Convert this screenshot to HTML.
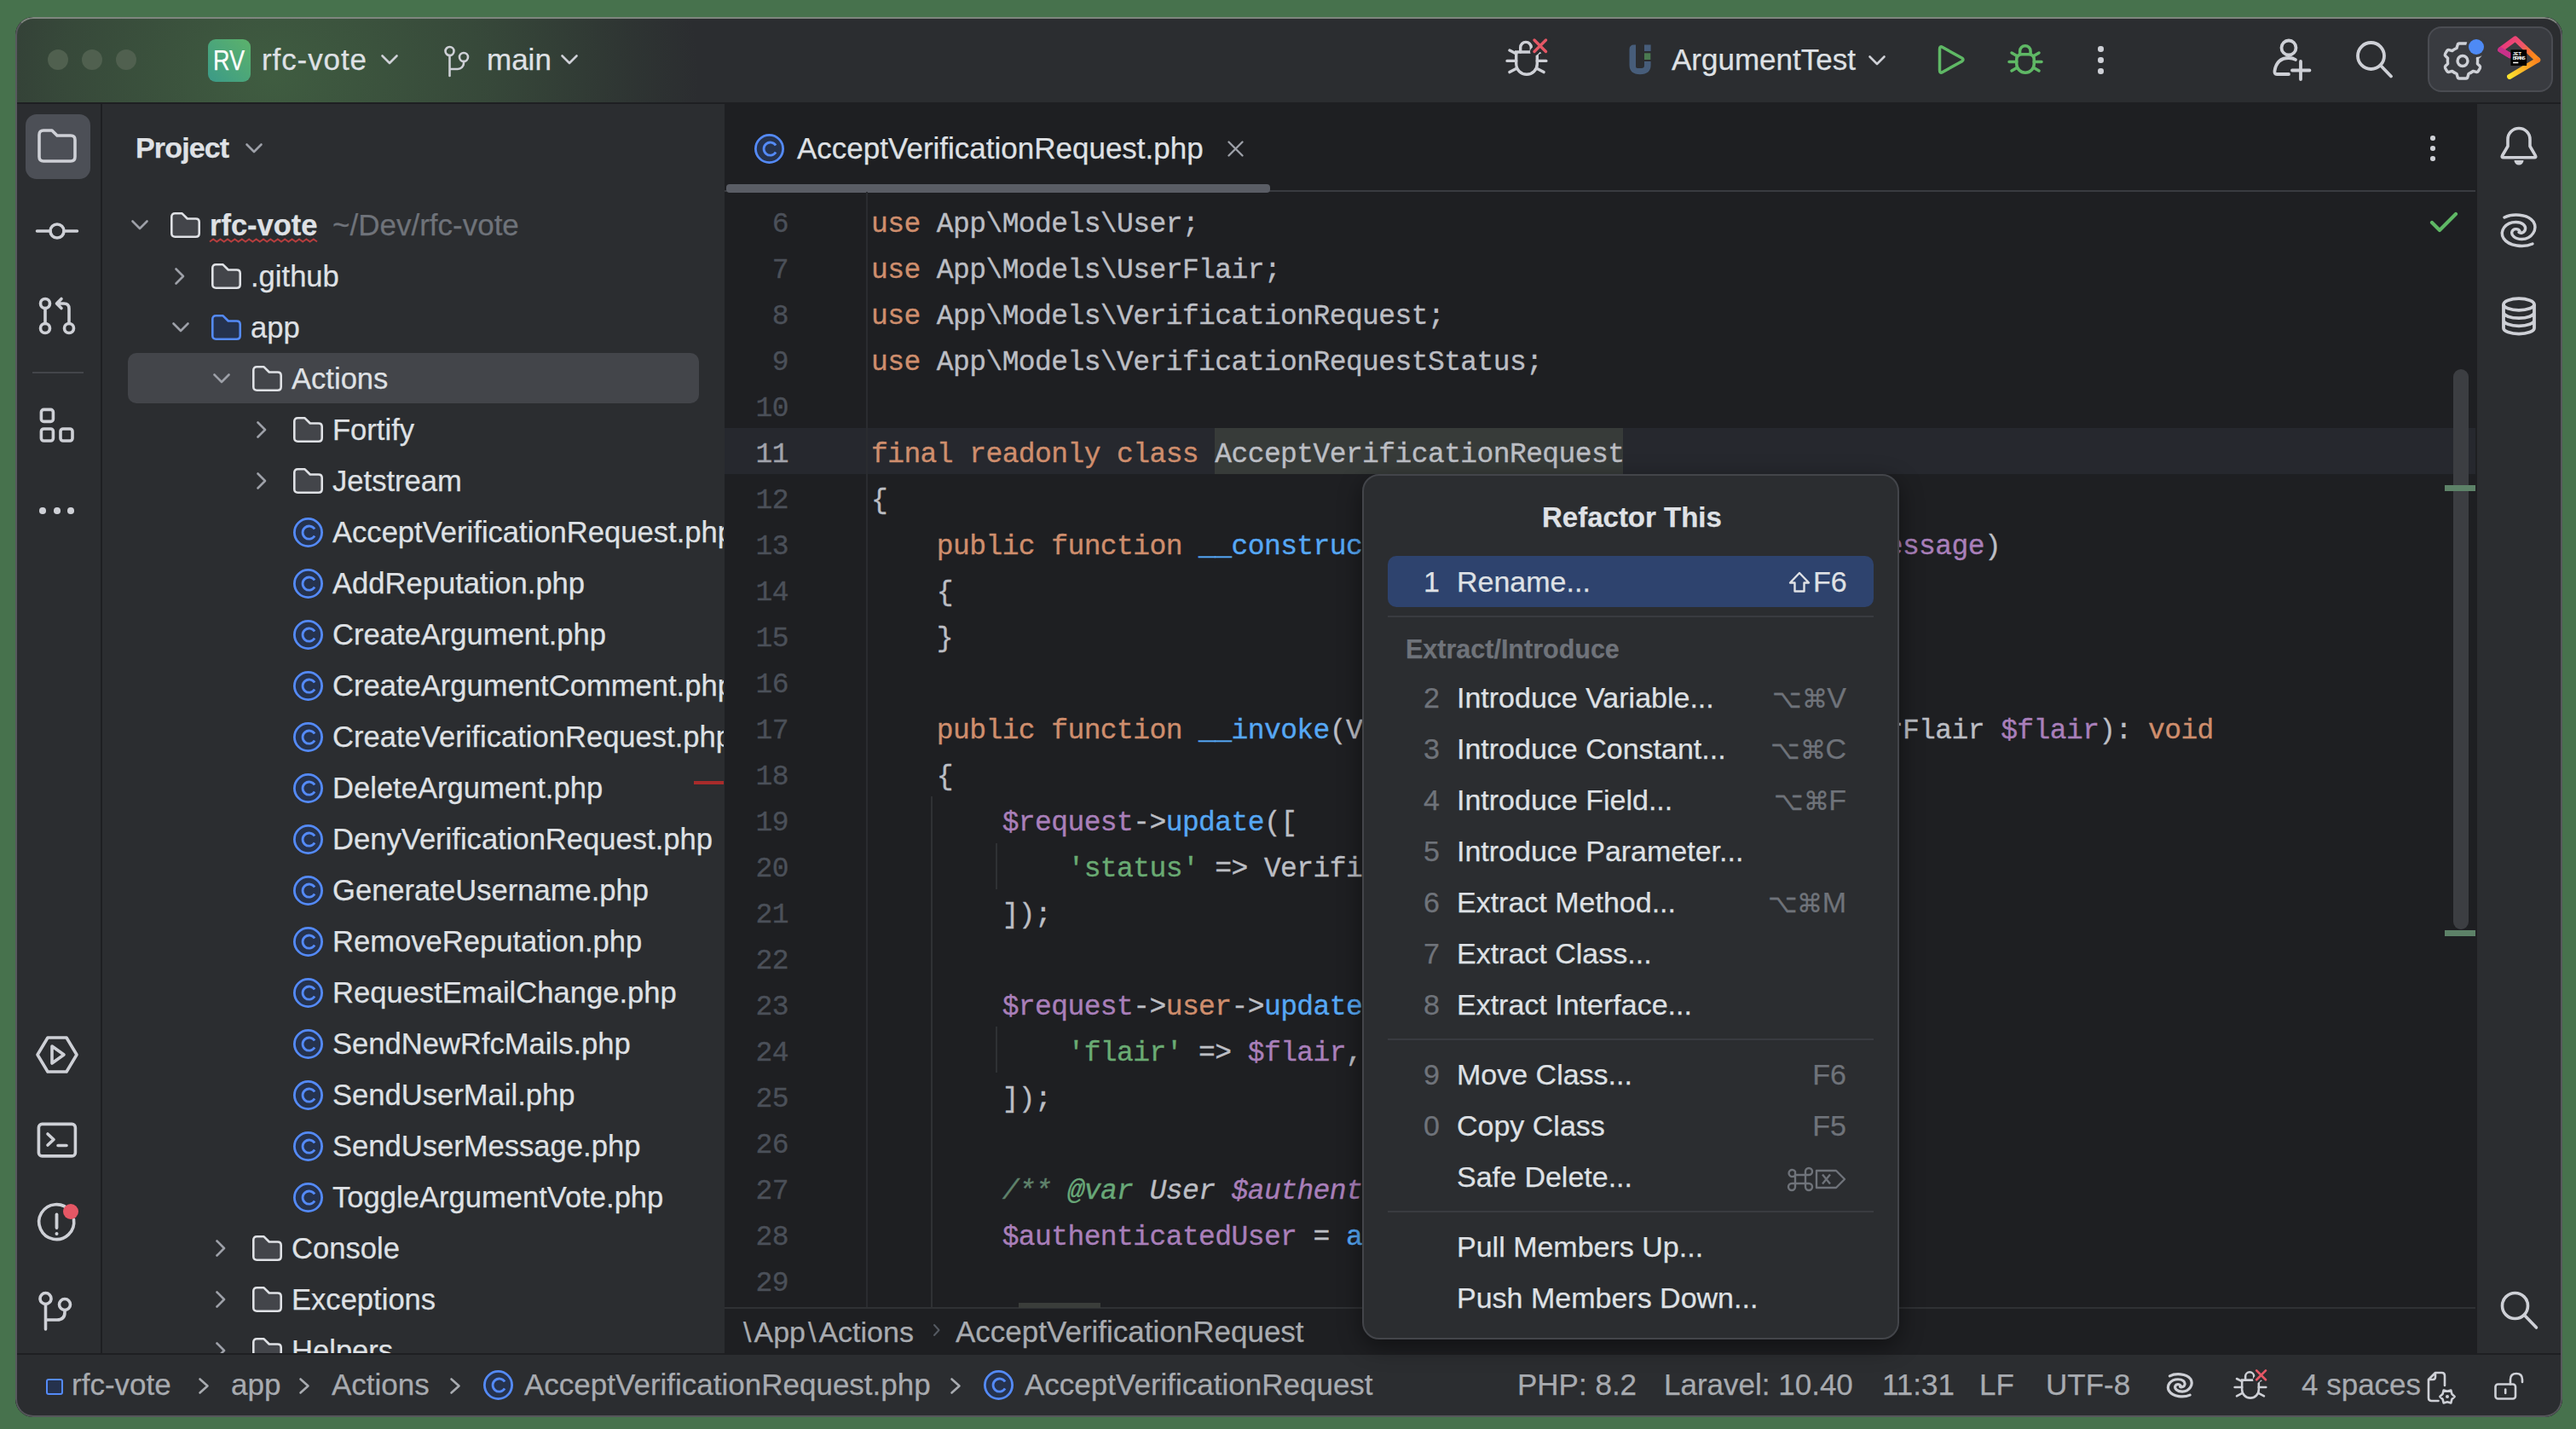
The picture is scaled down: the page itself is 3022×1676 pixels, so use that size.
<!DOCTYPE html><html><head><meta charset="utf-8"><title>PhpStorm</title><style>
*{margin:0;padding:0;box-sizing:border-box}
html,body{width:3022px;height:1676px;overflow:hidden;background:#47724d;font-family:"Liberation Sans", sans-serif}
.a{position:absolute}
svg.a{overflow:visible}
.t{position:absolute;white-space:nowrap;line-height:1;-webkit-text-stroke:0.25px currentColor}
#win{position:absolute;left:0;top:0;width:3022px;height:1676px;clip-path:inset(20px 16px 14px 18px round 21px);background:#2b2d30;overflow:hidden}
.code{position:absolute;white-space:pre;font-family:"Liberation Mono", monospace;font-size:33px;letter-spacing:-0.6px;line-height:54px;color:#bcbec4;-webkit-text-stroke:0.35px currentColor}
.k{color:#cf8e6d} .f{color:#56a8f5} .v{color:#a97fba} .s{color:#6aab73} .d{color:#5f826b;font-style:italic} .i{font-style:italic}
</style></head><body><div id="win">
<div class="a" style="left:0px;top:20px;width:3022px;height:100px;background:radial-gradient(ellipse 500px 420px at 320px 70px, rgba(82,136,80,0.52), rgba(82,136,80,0.30) 50%, rgba(82,136,80,0.08) 85%, rgba(82,136,80,0) 100%), #2b2d30;"></div>
<div class="a" style="left:0px;top:120px;width:3022px;height:2px;background:#1e1f22;"></div>
<div class="a" style="left:56px;top:58px;width:24px;height:24px;border-radius:50%;background:#50604f"></div>
<div class="a" style="left:96px;top:58px;width:24px;height:24px;border-radius:50%;background:#50604f"></div>
<div class="a" style="left:136px;top:58px;width:24px;height:24px;border-radius:50%;background:#50604f"></div>
<div class="a" style="left:244px;top:46px;width:50px;height:50px;border-radius:9px;background:linear-gradient(225deg,#5cb26b,#3b9a88)"></div>
<div class="t" style="left:250.00px;top:54.07px;font-size:33px;color:#ffffff;font-weight:normal;transform:scaleX(0.82);transform-origin:0 0">RV</div>
<div class="t" style="left:307.00px;top:52.37px;font-size:35px;color:#dfe1e5;font-weight:normal;letter-spacing:0.9px">rfc-vote</div>
<svg class="a" style="left:447px;top:64px;" width="20" height="12" viewBox="0 0 20 12" fill="none"><path d="M1.5 1.5 L10 10 L18.5 1.5" stroke="#ced0d6" stroke-width="2.6" stroke-linecap="round" stroke-linejoin="round"/></svg>
<svg class="a" style="left:521px;top:53px;" width="30" height="38" viewBox="0 0 30 38" fill="none"><circle cx="6.5" cy="7" r="5" stroke="#ced0d6" stroke-width="2.6"/><circle cx="23" cy="14" r="5" stroke="#ced0d6" stroke-width="2.6"/><path d="M6.5 12 V36 M6.5 28 H16 A7 7 0 0 0 23 21 V19" stroke="#ced0d6" stroke-width="2.6" stroke-linecap="round"/></svg>
<div class="t" style="left:571.00px;top:52.37px;font-size:35px;color:#dfe1e5;font-weight:normal;">main</div>
<svg class="a" style="left:658px;top:64px;" width="20" height="12" viewBox="0 0 20 12" fill="none"><path d="M1.5 1.5 L10 10 L18.5 1.5" stroke="#ced0d6" stroke-width="2.6" stroke-linecap="round" stroke-linejoin="round"/></svg>
<svg class="a" style="left:1766px;top:44px;" width="50" height="46" viewBox="0 0 50 46" fill="none"><g stroke="#ced0d6" stroke-width="3.4" stroke-linecap="round" fill="none"><path d="M12.7 17 H37.3 V31 A12.3 12.3 0 0 1 12.7 31 Z"/><path d="M17.7 17 V11.7 A6.3 6.3 0 0 1 30.3 11.7 V17"/><path d="M2 27.4 H12.7 M37.3 27.4 H47.9 M5 15 L12.7 19 M37.3 19 L45 15 M5 40.6 L12.7 36.5 M37.3 36.5 L45 40.6"/></g><path d="M34 3 L47.5 16.5 M47.5 3 L34 16.5" stroke="#2b2d30" stroke-width="10" stroke-linecap="round"/><path d="M34 3 L47.5 16.5 M47.5 3 L34 16.5" stroke="#e55765" stroke-width="3.4" stroke-linecap="round"/></svg>
<svg class="a" style="left:1910px;top:52px;" width="28" height="36" viewBox="0 0 28 36" fill="none"><path d="M1.5 6 Q1.5 0.5 7 0.5 H9 V26 Q9 28 11 28 H15.5 Q19 28 19 25 V20 H26.6 V24 Q26.6 35.2 14 35.2 Q1.5 35.2 1.5 24 Z" fill="#475d7a"/><rect x="19" y="0.5" width="7.6" height="7.5" fill="#475d7a"/><rect x="19" y="10.3" width="7.3" height="7.7" fill="#4a7a50"/></svg>
<div class="t" style="left:1961.00px;top:52.37px;font-size:35px;color:#dfe1e5;font-weight:normal;">ArgumentTest</div>
<svg class="a" style="left:2192px;top:65px;" width="20" height="12" viewBox="0 0 20 12" fill="none"><path d="M1.5 1.5 L10 10 L18.5 1.5" stroke="#ced0d6" stroke-width="2.6" stroke-linecap="round" stroke-linejoin="round"/></svg>
<svg class="a" style="left:2272px;top:52px;" width="36" height="37" viewBox="0 0 36 37" fill="none"><path d="M3.5 5.5 Q3.5 1.5 7 3.5 L29.5 16 Q32.5 18 29.5 20 L7 32.5 Q3.5 34.5 3.5 30.5 Z" stroke="#5fb865" stroke-width="3.5" stroke-linejoin="round"/></svg>
<svg class="a" style="left:2355px;top:50px;" width="42" height="40" viewBox="0 0 42 40" fill="none"><g stroke="#5fb865" stroke-width="3.5" stroke-linecap="round" fill="none"><path d="M10.75 20 Q10.75 13.75 17 13.75 H25 Q31.25 13.75 31.25 20 V25 A10.25 10.25 0 0 1 10.75 25 Z"/><path d="M14.6 13.5 V10 A6.25 6.25 0 0 1 27.1 10 V13.5"/><path d="M2 22.5 H10.75 M31.25 22.5 H40 M5 12 L11 15.5 M31 15.5 L37 12 M5 33 L11 29.5 M31 29.5 L37 33"/></g></svg>
<div class="a" style="left:2461px;top:54px;width:6.5px;height:6.5px;border-radius:50%;background:#ced0d6"></div>
<div class="a" style="left:2461px;top:67px;width:6.5px;height:6.5px;border-radius:50%;background:#ced0d6"></div>
<div class="a" style="left:2461px;top:80px;width:6.5px;height:6.5px;border-radius:50%;background:#ced0d6"></div>
<svg class="a" style="left:2666px;top:45px;" width="48" height="52" viewBox="0 0 48 52" fill="none"><circle cx="19" cy="11" r="8.5" stroke="#ced0d6" stroke-width="3.8"/><path d="M19 42 H5 Q2 42 2.5 38 Q5 23 19 23 Q24 23 27 25" stroke="#ced0d6" stroke-width="3.8" stroke-linecap="round"/><path d="M33 27 V48 M23 37.5 H43.5" stroke="#ced0d6" stroke-width="3.8" stroke-linecap="round"/></svg>
<svg class="a" style="left:2764px;top:48px;" width="46" height="46" viewBox="0 0 46 46" fill="none"><circle cx="17.5" cy="17.5" r="15.5" stroke="#ced0d6" stroke-width="3.8"/><path d="M29 29 L41 41.5" stroke="#ced0d6" stroke-width="3.8" stroke-linecap="round"/></svg>
<div class="a" style="left:2848px;top:31px;width:147px;height:77px;border-radius:16px;background:#393b40;border:2px solid #4a4c52"></div>
<svg class="a" style="left:2866px;top:48px;" width="46" height="47" viewBox="0 0 46 47" fill="none"><path d="M23 3 L27 3 Q28.5 3 29 5 L30 8.5 Q33 9.7 35.3 11.6 L38.8 10.6 Q40.5 10.1 41.4 11.6 L43.4 15 Q44.2 16.5 43 17.8 L40.4 20.3 Q40.9 23.5 40.4 26.7 L43 29.2 Q44.2 30.5 43.4 32 L41.4 35.4 Q40.5 36.9 38.8 36.4 L35.3 35.4 Q33 37.3 30 38.5 L29 42 Q28.5 44 27 44 L19 44 Q17.5 44 17 42 L16 38.5 Q13 37.3 10.7 35.4 L7.2 36.4 Q5.5 36.9 4.6 35.4 L2.6 32 Q1.8 30.5 3 29.2 L5.6 26.7 Q5.1 23.5 5.6 20.3 L3 17.8 Q1.8 16.5 2.6 15 L4.6 11.6 Q5.5 10.1 7.2 10.6 L10.7 11.6 Q13 9.7 16 8.5 L17 5 Q17.5 3 19 3 Z" stroke="#ced0d6" stroke-width="3.4" stroke-linejoin="round"/><circle cx="23" cy="23.5" r="6" stroke="#ced0d6" stroke-width="3.4"/></svg>
<div class="a" style="left:2896px;top:46px;width:18px;height:18px;border-radius:50%;background:#4e8af5;box-shadow:0 0 0 3px #393b40"></div>
<svg class="a" style="left:2928px;top:40px;" width="56" height="58" viewBox="0 0 56 58" fill="none"><g transform="translate(3.2,3.2) scale(0.89)"><defs><linearGradient id="jg1" gradientUnits="userSpaceOnUse" x1="2" y1="10" x2="50" y2="40"><stop offset="0" stop-color="#e8357f"/><stop offset="0.45" stop-color="#f0566a"/><stop offset="0.75" stop-color="#fc801d"/><stop offset="1" stop-color="#fd9a1d"/></linearGradient><linearGradient id="jg2" gradientUnits="userSpaceOnUse" x1="51" y1="30" x2="14" y2="52"><stop offset="0" stop-color="#fc801d"/><stop offset="1" stop-color="#fde22f"/></linearGradient></defs><path d="M15 24.6 L2.5 17 L22 2.5 L51.5 30.5" stroke="url(#jg1)" stroke-width="7" stroke-linejoin="round" stroke-linecap="round"/><path d="M51.5 30.5 L14.6 52.4" stroke="url(#jg2)" stroke-width="7" stroke-linecap="round"/><path d="M15 24.6 L2.5 17" stroke="#c8308a" stroke-width="7" stroke-linecap="round"/><rect x="16" y="17" width="21" height="21" fill="#000"/><path d="M19 34 H26" stroke="#fff" stroke-width="1.6"/><text x="18.5" y="24.5" font-size="6.2" fill="#fff" font-family="Liberation Sans" font-weight="bold">JET</text><text x="18.5" y="30" font-size="6.2" fill="#fff" font-family="Liberation Sans" font-weight="bold" textLength="17">BRAINS</text></g></svg>
<div class="a" style="left:0px;top:122px;width:118px;height:1466px;background:#2b2d30;"></div>
<div class="a" style="left:118px;top:122px;width:2px;height:1466px;background:#1e1f22;"></div>
<div class="a" style="left:30px;top:134px;width:76px;height:76px;border-radius:13px;background:#4c4f56"></div>
<svg class="a" style="left:44px;top:151px;" width="46" height="40" viewBox="0 0 46 40" fill="none"><path d="M2 33 V7 Q2 2 7 2 H17 L23 8 H39 Q44 8 44 13 V33 Q44 38 39 38 H7 Q2 38 2 33 Z" stroke="#ced0d6" stroke-width="3.6" stroke-linejoin="round"/></svg>
<svg class="a" style="left:42px;top:260px;" width="50" height="22" viewBox="0 0 50 22" fill="none"><circle cx="25" cy="11" r="8" stroke="#ced0d6" stroke-width="3.6"/><path d="M1.5 11 H17 M33 11 H48.5" stroke="#ced0d6" stroke-width="3.6" stroke-linecap="round"/></svg>
<svg class="a" style="left:45px;top:348px;" width="46" height="46" viewBox="0 0 46 46" fill="none"><circle cx="8" cy="8" r="5.5" stroke="#ced0d6" stroke-width="3.6"/><circle cx="8" cy="37" r="5.5" stroke="#ced0d6" stroke-width="3.6"/><circle cx="36" cy="37" r="5.5" stroke="#ced0d6" stroke-width="3.6"/><path d="M8 13.5 V31.5 M36 31.5 V14 Q36 8 30 8 H22 M27 2.5 L21.5 8 L27 13.5" stroke="#ced0d6" stroke-width="3.6" stroke-linecap="round" stroke-linejoin="round"/></svg>
<div class="a" style="left:38px;top:436px;width:60px;height:2px;background:#43454a;"></div>
<svg class="a" style="left:46px;top:478px;" width="42" height="42" viewBox="0 0 42 42" fill="none"><rect x="2.4" y="2.4" width="14" height="14" rx="3" stroke="#ced0d6" stroke-width="3.6"/><rect x="2.4" y="25" width="14" height="14" rx="3" stroke="#ced0d6" stroke-width="3.6"/><rect x="25" y="25" width="14" height="14" rx="3" stroke="#ced0d6" stroke-width="3.6"/></svg>
<div class="a" style="left:46.2px;top:595.2px;width:7.6px;height:7.6px;border-radius:50%;background:#ced0d6"></div>
<div class="a" style="left:63.2px;top:595.2px;width:7.6px;height:7.6px;border-radius:50%;background:#ced0d6"></div>
<div class="a" style="left:79.2px;top:595.2px;width:7.6px;height:7.6px;border-radius:50%;background:#ced0d6"></div>
<svg class="a" style="left:42px;top:1215px;" width="50" height="44" viewBox="0 0 50 44" fill="none"><path d="M14 2 H36 L48 22 L36 42 H14 L2 22 Z" stroke="#ced0d6" stroke-width="3.6" stroke-linejoin="round"/><path d="M19 12 L33 22 L19 32 Z" stroke="#ced0d6" stroke-width="3.6" stroke-linejoin="round"/></svg>
<svg class="a" style="left:44px;top:1317px;" width="46" height="41" viewBox="0 0 46 41" fill="none"><rect x="1.4" y="1.4" width="43" height="37.5" rx="4" stroke="#ced0d6" stroke-width="3.6"/><path d="M12 13 L19 19.5 L12 26 M24 26.5 H34" stroke="#ced0d6" stroke-width="3.6" stroke-linecap="round" stroke-linejoin="round"/></svg>
<svg class="a" style="left:44px;top:1414px;" width="50" height="47" viewBox="0 0 50 47" fill="none"><path d="M38 6 A20.5 20.5 0 1 0 42.5 16" stroke="#ced0d6" stroke-width="3.6" stroke-linecap="round"/><path d="M22.5 10.5 V26" stroke="#ced0d6" stroke-width="3.8" stroke-linecap="round"/><circle cx="22.5" cy="33" r="2" fill="#ced0d6"/></svg>
<div class="a" style="left:74px;top:1412px;width:18px;height:18px;border-radius:50%;background:#e55765"></div>
<svg class="a" style="left:45px;top:1514px;" width="42" height="47" viewBox="0 0 42 47" fill="none"><circle cx="8.5" cy="9" r="6.5" stroke="#ced0d6" stroke-width="3.6"/><circle cx="31" cy="16" r="6.5" stroke="#ced0d6" stroke-width="3.6"/><path d="M8.5 15.5 V45 M8.5 34 H22 Q31 34 31 25 V22.5" stroke="#ced0d6" stroke-width="3.6" stroke-linecap="round"/></svg>
<div class="a" style="left:120px;top:122px;width:730px;height:1466px;background:#2b2d30;"></div>
<div class="t" style="left:159.00px;top:156.22px;font-size:34px;color:#dfe1e5;font-weight:bold;letter-spacing:-0.85px">Project</div>
<svg class="a" style="left:288px;top:168px;" width="20" height="12" viewBox="0 0 20 12" fill="none"><path d="M1.5 1.5 L10 10 L18.5 1.5" stroke="#9da0a8" stroke-width="2.6" stroke-linecap="round" stroke-linejoin="round"/></svg>
<div class="a" style="left:120px;top:122px;width:730px;height:1466px;overflow:hidden;">
<div class="a" style="left:30px;top:292px;width:670px;height:59px;border-radius:10px;background:#43454a"></div>
<svg class="a" style="left:34px;top:136px;" width="20" height="12" viewBox="0 0 20 12" fill="none"><path d="M1.5 1.5 L10 10 L18.5 1.5" stroke="#9da0a8" stroke-width="2.6" stroke-linecap="round" stroke-linejoin="round"/></svg>
<svg class="a" style="left:80px;top:127px;" width="35" height="30" viewBox="0 0 35 30" fill="none"><path d="M1.3 24.7 V5.3 Q1.3 1.3 5.3 1.3 H13.6 L19.8 7.5 H29.7 Q33.7 7.5 33.7 11.5 V24.7 Q33.7 28.7 29.7 28.7 H5.3 Q1.3 28.7 1.3 24.7 Z" fill="#43454a" stroke="#dfe1e5" stroke-width="2.6" stroke-linejoin="round"/></svg>
<div class="t" style="left:126.00px;top:124.80px;font-size:34.5px;color:#dfe1e5;font-weight:bold;">rfc-vote</div>
<div class="t" style="left:270.00px;top:124.37px;font-size:35px;color:#6f737a;font-weight:normal;">~/Dev/rfc-vote</div>
<svg class="a" style="left:126px;top:156px;" width="126" height="8" viewBox="0 0 126 8" fill="none"><path d="M0.0 5.5 L4.2 2.5 L8.4 5.5 L12.6 2.5 L16.8 5.5 L21.0 2.5 L25.2 5.5 L29.4 2.5 L33.6 5.5 L37.8 2.5 L42.0 5.5 L46.2 2.5 L50.4 5.5 L54.6 2.5 L58.8 5.5 L63.0 2.5 L67.2 5.5 L71.4 2.5 L75.6 5.5 L79.8 2.5 L84.0 5.5 L88.2 2.5 L92.4 5.5 L96.6 2.5 L100.8 5.5 L105.0 2.5 L109.2 5.5 L113.4 2.5 L117.6 5.5 L121.8 2.5 L126.0 5.5" stroke="#b53e3e" stroke-width="2"/></svg>
<svg class="a" style="left:85px;top:192px;" width="12" height="20" viewBox="0 0 12 20" fill="none"><path d="M1.5 1.5 L10 10 L1.5 18.5" stroke="#9da0a8" stroke-width="2.6" stroke-linecap="round" stroke-linejoin="round"/></svg>
<svg class="a" style="left:128px;top:187px;" width="35" height="30" viewBox="0 0 35 30" fill="none"><path d="M1.3 24.7 V5.3 Q1.3 1.3 5.3 1.3 H13.6 L19.8 7.5 H29.7 Q33.7 7.5 33.7 11.5 V24.7 Q33.7 28.7 29.7 28.7 H5.3 Q1.3 28.7 1.3 24.7 Z" fill="#43454a" stroke="#dfe1e5" stroke-width="2.6" stroke-linejoin="round"/></svg>
<div class="t" style="left:174.00px;top:184.71px;font-size:34.6px;color:#dfe1e5;font-weight:normal;">.github</div>
<svg class="a" style="left:82px;top:256px;" width="20" height="12" viewBox="0 0 20 12" fill="none"><path d="M1.5 1.5 L10 10 L18.5 1.5" stroke="#9da0a8" stroke-width="2.6" stroke-linecap="round" stroke-linejoin="round"/></svg>
<svg class="a" style="left:128px;top:247px;" width="35" height="30" viewBox="0 0 35 30" fill="none"><path d="M1.3 24.7 V5.3 Q1.3 1.3 5.3 1.3 H13.6 L19.8 7.5 H29.7 Q33.7 7.5 33.7 11.5 V24.7 Q33.7 28.7 29.7 28.7 H5.3 Q1.3 28.7 1.3 24.7 Z" fill="#25324d" stroke="#548af7" stroke-width="2.6" stroke-linejoin="round"/></svg>
<div class="t" style="left:174.00px;top:244.71px;font-size:34.6px;color:#dfe1e5;font-weight:normal;">app</div>
<svg class="a" style="left:130px;top:316px;" width="20" height="12" viewBox="0 0 20 12" fill="none"><path d="M1.5 1.5 L10 10 L18.5 1.5" stroke="#9da0a8" stroke-width="2.6" stroke-linecap="round" stroke-linejoin="round"/></svg>
<svg class="a" style="left:176px;top:307px;" width="35" height="30" viewBox="0 0 35 30" fill="none"><path d="M1.3 24.7 V5.3 Q1.3 1.3 5.3 1.3 H13.6 L19.8 7.5 H29.7 Q33.7 7.5 33.7 11.5 V24.7 Q33.7 28.7 29.7 28.7 H5.3 Q1.3 28.7 1.3 24.7 Z" fill="#43454a" stroke="#dfe1e5" stroke-width="2.6" stroke-linejoin="round"/></svg>
<div class="t" style="left:222.00px;top:304.71px;font-size:34.6px;color:#dfe1e5;font-weight:normal;">Actions</div>
<svg class="a" style="left:181px;top:372px;" width="12" height="20" viewBox="0 0 12 20" fill="none"><path d="M1.5 1.5 L10 10 L1.5 18.5" stroke="#9da0a8" stroke-width="2.6" stroke-linecap="round" stroke-linejoin="round"/></svg>
<svg class="a" style="left:224px;top:367px;" width="35" height="30" viewBox="0 0 35 30" fill="none"><path d="M1.3 24.7 V5.3 Q1.3 1.3 5.3 1.3 H13.6 L19.8 7.5 H29.7 Q33.7 7.5 33.7 11.5 V24.7 Q33.7 28.7 29.7 28.7 H5.3 Q1.3 28.7 1.3 24.7 Z" fill="#43454a" stroke="#dfe1e5" stroke-width="2.6" stroke-linejoin="round"/></svg>
<div class="t" style="left:270.00px;top:364.71px;font-size:34.6px;color:#dfe1e5;font-weight:normal;">Fortify</div>
<svg class="a" style="left:181px;top:432px;" width="12" height="20" viewBox="0 0 12 20" fill="none"><path d="M1.5 1.5 L10 10 L1.5 18.5" stroke="#9da0a8" stroke-width="2.6" stroke-linecap="round" stroke-linejoin="round"/></svg>
<svg class="a" style="left:224px;top:427px;" width="35" height="30" viewBox="0 0 35 30" fill="none"><path d="M1.3 24.7 V5.3 Q1.3 1.3 5.3 1.3 H13.6 L19.8 7.5 H29.7 Q33.7 7.5 33.7 11.5 V24.7 Q33.7 28.7 29.7 28.7 H5.3 Q1.3 28.7 1.3 24.7 Z" fill="#43454a" stroke="#dfe1e5" stroke-width="2.6" stroke-linejoin="round"/></svg>
<div class="t" style="left:270.00px;top:424.71px;font-size:34.6px;color:#dfe1e5;font-weight:normal;">Jetstream</div>
<svg class="a" style="left:224px;top:484.5px;" width="35" height="35" viewBox="0 0 35 35" fill="none"><circle cx="17.5" cy="17.5" r="16.1" fill="#25324d" stroke="#548af7" stroke-width="2.8"/><path d="M25.1 13.6 A7.6 7.6 0 1 0 25.1 21.6" stroke="#548af7" stroke-width="2.8"/></svg>
<div class="t" style="left:270.00px;top:484.71px;font-size:34.6px;color:#dfe1e5;font-weight:normal;">AcceptVerificationRequest.php</div>
<svg class="a" style="left:224px;top:544.5px;" width="35" height="35" viewBox="0 0 35 35" fill="none"><circle cx="17.5" cy="17.5" r="16.1" fill="#25324d" stroke="#548af7" stroke-width="2.8"/><path d="M25.1 13.6 A7.6 7.6 0 1 0 25.1 21.6" stroke="#548af7" stroke-width="2.8"/></svg>
<div class="t" style="left:270.00px;top:544.71px;font-size:34.6px;color:#dfe1e5;font-weight:normal;">AddReputation.php</div>
<svg class="a" style="left:224px;top:604.5px;" width="35" height="35" viewBox="0 0 35 35" fill="none"><circle cx="17.5" cy="17.5" r="16.1" fill="#25324d" stroke="#548af7" stroke-width="2.8"/><path d="M25.1 13.6 A7.6 7.6 0 1 0 25.1 21.6" stroke="#548af7" stroke-width="2.8"/></svg>
<div class="t" style="left:270.00px;top:604.71px;font-size:34.6px;color:#dfe1e5;font-weight:normal;">CreateArgument.php</div>
<svg class="a" style="left:224px;top:664.5px;" width="35" height="35" viewBox="0 0 35 35" fill="none"><circle cx="17.5" cy="17.5" r="16.1" fill="#25324d" stroke="#548af7" stroke-width="2.8"/><path d="M25.1 13.6 A7.6 7.6 0 1 0 25.1 21.6" stroke="#548af7" stroke-width="2.8"/></svg>
<div class="t" style="left:270.00px;top:664.71px;font-size:34.6px;color:#dfe1e5;font-weight:normal;">CreateArgumentComment.php</div>
<svg class="a" style="left:224px;top:724.5px;" width="35" height="35" viewBox="0 0 35 35" fill="none"><circle cx="17.5" cy="17.5" r="16.1" fill="#25324d" stroke="#548af7" stroke-width="2.8"/><path d="M25.1 13.6 A7.6 7.6 0 1 0 25.1 21.6" stroke="#548af7" stroke-width="2.8"/></svg>
<div class="t" style="left:270.00px;top:724.71px;font-size:34.6px;color:#dfe1e5;font-weight:normal;">CreateVerificationRequest.php</div>
<svg class="a" style="left:224px;top:784.5px;" width="35" height="35" viewBox="0 0 35 35" fill="none"><circle cx="17.5" cy="17.5" r="16.1" fill="#25324d" stroke="#548af7" stroke-width="2.8"/><path d="M25.1 13.6 A7.6 7.6 0 1 0 25.1 21.6" stroke="#548af7" stroke-width="2.8"/></svg>
<div class="t" style="left:270.00px;top:784.71px;font-size:34.6px;color:#dfe1e5;font-weight:normal;">DeleteArgument.php</div>
<svg class="a" style="left:224px;top:844.5px;" width="35" height="35" viewBox="0 0 35 35" fill="none"><circle cx="17.5" cy="17.5" r="16.1" fill="#25324d" stroke="#548af7" stroke-width="2.8"/><path d="M25.1 13.6 A7.6 7.6 0 1 0 25.1 21.6" stroke="#548af7" stroke-width="2.8"/></svg>
<div class="t" style="left:270.00px;top:844.71px;font-size:34.6px;color:#dfe1e5;font-weight:normal;">DenyVerificationRequest.php</div>
<svg class="a" style="left:224px;top:904.5px;" width="35" height="35" viewBox="0 0 35 35" fill="none"><circle cx="17.5" cy="17.5" r="16.1" fill="#25324d" stroke="#548af7" stroke-width="2.8"/><path d="M25.1 13.6 A7.6 7.6 0 1 0 25.1 21.6" stroke="#548af7" stroke-width="2.8"/></svg>
<div class="t" style="left:270.00px;top:904.71px;font-size:34.6px;color:#dfe1e5;font-weight:normal;">GenerateUsername.php</div>
<svg class="a" style="left:224px;top:964.5px;" width="35" height="35" viewBox="0 0 35 35" fill="none"><circle cx="17.5" cy="17.5" r="16.1" fill="#25324d" stroke="#548af7" stroke-width="2.8"/><path d="M25.1 13.6 A7.6 7.6 0 1 0 25.1 21.6" stroke="#548af7" stroke-width="2.8"/></svg>
<div class="t" style="left:270.00px;top:964.71px;font-size:34.6px;color:#dfe1e5;font-weight:normal;">RemoveReputation.php</div>
<svg class="a" style="left:224px;top:1024.5px;" width="35" height="35" viewBox="0 0 35 35" fill="none"><circle cx="17.5" cy="17.5" r="16.1" fill="#25324d" stroke="#548af7" stroke-width="2.8"/><path d="M25.1 13.6 A7.6 7.6 0 1 0 25.1 21.6" stroke="#548af7" stroke-width="2.8"/></svg>
<div class="t" style="left:270.00px;top:1024.71px;font-size:34.6px;color:#dfe1e5;font-weight:normal;">RequestEmailChange.php</div>
<svg class="a" style="left:224px;top:1084.5px;" width="35" height="35" viewBox="0 0 35 35" fill="none"><circle cx="17.5" cy="17.5" r="16.1" fill="#25324d" stroke="#548af7" stroke-width="2.8"/><path d="M25.1 13.6 A7.6 7.6 0 1 0 25.1 21.6" stroke="#548af7" stroke-width="2.8"/></svg>
<div class="t" style="left:270.00px;top:1084.71px;font-size:34.6px;color:#dfe1e5;font-weight:normal;">SendNewRfcMails.php</div>
<svg class="a" style="left:224px;top:1144.5px;" width="35" height="35" viewBox="0 0 35 35" fill="none"><circle cx="17.5" cy="17.5" r="16.1" fill="#25324d" stroke="#548af7" stroke-width="2.8"/><path d="M25.1 13.6 A7.6 7.6 0 1 0 25.1 21.6" stroke="#548af7" stroke-width="2.8"/></svg>
<div class="t" style="left:270.00px;top:1144.71px;font-size:34.6px;color:#dfe1e5;font-weight:normal;">SendUserMail.php</div>
<svg class="a" style="left:224px;top:1204.5px;" width="35" height="35" viewBox="0 0 35 35" fill="none"><circle cx="17.5" cy="17.5" r="16.1" fill="#25324d" stroke="#548af7" stroke-width="2.8"/><path d="M25.1 13.6 A7.6 7.6 0 1 0 25.1 21.6" stroke="#548af7" stroke-width="2.8"/></svg>
<div class="t" style="left:270.00px;top:1204.71px;font-size:34.6px;color:#dfe1e5;font-weight:normal;">SendUserMessage.php</div>
<svg class="a" style="left:224px;top:1264.5px;" width="35" height="35" viewBox="0 0 35 35" fill="none"><circle cx="17.5" cy="17.5" r="16.1" fill="#25324d" stroke="#548af7" stroke-width="2.8"/><path d="M25.1 13.6 A7.6 7.6 0 1 0 25.1 21.6" stroke="#548af7" stroke-width="2.8"/></svg>
<div class="t" style="left:270.00px;top:1264.71px;font-size:34.6px;color:#dfe1e5;font-weight:normal;">ToggleArgumentVote.php</div>
<svg class="a" style="left:133px;top:1332px;" width="12" height="20" viewBox="0 0 12 20" fill="none"><path d="M1.5 1.5 L10 10 L1.5 18.5" stroke="#9da0a8" stroke-width="2.6" stroke-linecap="round" stroke-linejoin="round"/></svg>
<svg class="a" style="left:176px;top:1327px;" width="35" height="30" viewBox="0 0 35 30" fill="none"><path d="M1.3 24.7 V5.3 Q1.3 1.3 5.3 1.3 H13.6 L19.8 7.5 H29.7 Q33.7 7.5 33.7 11.5 V24.7 Q33.7 28.7 29.7 28.7 H5.3 Q1.3 28.7 1.3 24.7 Z" fill="#43454a" stroke="#dfe1e5" stroke-width="2.6" stroke-linejoin="round"/></svg>
<div class="t" style="left:222.00px;top:1324.71px;font-size:34.6px;color:#dfe1e5;font-weight:normal;">Console</div>
<svg class="a" style="left:133px;top:1392px;" width="12" height="20" viewBox="0 0 12 20" fill="none"><path d="M1.5 1.5 L10 10 L1.5 18.5" stroke="#9da0a8" stroke-width="2.6" stroke-linecap="round" stroke-linejoin="round"/></svg>
<svg class="a" style="left:176px;top:1387px;" width="35" height="30" viewBox="0 0 35 30" fill="none"><path d="M1.3 24.7 V5.3 Q1.3 1.3 5.3 1.3 H13.6 L19.8 7.5 H29.7 Q33.7 7.5 33.7 11.5 V24.7 Q33.7 28.7 29.7 28.7 H5.3 Q1.3 28.7 1.3 24.7 Z" fill="#43454a" stroke="#dfe1e5" stroke-width="2.6" stroke-linejoin="round"/></svg>
<div class="t" style="left:222.00px;top:1384.71px;font-size:34.6px;color:#dfe1e5;font-weight:normal;">Exceptions</div>
<svg class="a" style="left:133px;top:1452px;" width="12" height="20" viewBox="0 0 12 20" fill="none"><path d="M1.5 1.5 L10 10 L1.5 18.5" stroke="#9da0a8" stroke-width="2.6" stroke-linecap="round" stroke-linejoin="round"/></svg>
<svg class="a" style="left:176px;top:1447px;" width="35" height="30" viewBox="0 0 35 30" fill="none"><path d="M1.3 24.7 V5.3 Q1.3 1.3 5.3 1.3 H13.6 L19.8 7.5 H29.7 Q33.7 7.5 33.7 11.5 V24.7 Q33.7 28.7 29.7 28.7 H5.3 Q1.3 28.7 1.3 24.7 Z" fill="#43454a" stroke="#dfe1e5" stroke-width="2.6" stroke-linejoin="round"/></svg>
<div class="t" style="left:222.00px;top:1444.71px;font-size:34.6px;color:#dfe1e5;font-weight:normal;">Helpers</div>
<div class="a" style="left:694px;top:794px;width:36px;height:4px;background:#a82b2b;"></div>
</div>
<div class="a" style="left:849px;top:122px;width:1px;height:1466px;background:#2b2d30;"></div>
<div class="a" style="left:850px;top:122px;width:2054px;height:1466px;background:#1e1f22;"></div>
<div class="a" style="left:850px;top:223px;width:2054px;height:2px;background:#393b40;"></div>
<svg class="a" style="left:885px;top:157px;" width="35" height="35" viewBox="0 0 35 35" fill="none"><circle cx="17.5" cy="17.5" r="16.1" fill="#25324d" stroke="#548af7" stroke-width="2.8"/><path d="M25.1 13.6 A7.6 7.6 0 1 0 25.1 21.6" stroke="#548af7" stroke-width="2.8"/></svg>
<div class="t" style="left:935.00px;top:156.37px;font-size:35px;color:#dfe1e5;font-weight:normal;">AcceptVerificationRequest.php</div>
<svg class="a" style="left:1440px;top:165px;" width="19" height="19" viewBox="0 0 19 19" fill="none"><path d="M1.5 1.5 L17.5 17.5 M17.5 1.5 L1.5 17.5" stroke="#9da0a8" stroke-width="2.4" stroke-linecap="round"/></svg>
<div class="a" style="left:852px;top:216px;width:638px;height:10px;border-radius:4px;background:#5a5d65"></div>
<div class="a" style="left:2851px;top:159.3px;width:5.5px;height:5.5px;border-radius:50%;background:#ced0d6"></div>
<div class="a" style="left:2851px;top:171.3px;width:5.5px;height:5.5px;border-radius:50%;background:#ced0d6"></div>
<div class="a" style="left:2851px;top:183.3px;width:5.5px;height:5.5px;border-radius:50%;background:#ced0d6"></div>
<div class="a" style="left:850px;top:502px;width:2054px;height:54px;background:#26282e;"></div>
<div class="a" style="left:1425px;top:502px;width:479px;height:54px;background:#373b39;"></div>
<div class="a" style="left:1016px;top:225px;width:2px;height:1309px;background:#2a2c30;"></div>
<div class="a" style="left:1092px;top:934px;width:2px;height:600px;background:#2f3134;"></div>
<div class="a" style="left:1168px;top:989px;width:2px;height:54px;background:#2f3134;"></div>
<div class="a" style="left:1168px;top:1204px;width:2px;height:54px;background:#2f3134;"></div>
<div class="code" style="left:861px;top:236.5px;width:64px;text-align:right;color:#4b5059">6</div>
<div class="code" style="left:861px;top:290.5px;width:64px;text-align:right;color:#4b5059">7</div>
<div class="code" style="left:861px;top:344.5px;width:64px;text-align:right;color:#4b5059">8</div>
<div class="code" style="left:861px;top:398.5px;width:64px;text-align:right;color:#4b5059">9</div>
<div class="code" style="left:861px;top:452.5px;width:64px;text-align:right;color:#4b5059">10</div>
<div class="code" style="left:861px;top:506.5px;width:64px;text-align:right;color:#a1a3ab">11</div>
<div class="code" style="left:861px;top:560.5px;width:64px;text-align:right;color:#4b5059">12</div>
<div class="code" style="left:861px;top:614.5px;width:64px;text-align:right;color:#4b5059">13</div>
<div class="code" style="left:861px;top:668.5px;width:64px;text-align:right;color:#4b5059">14</div>
<div class="code" style="left:861px;top:722.5px;width:64px;text-align:right;color:#4b5059">15</div>
<div class="code" style="left:861px;top:776.5px;width:64px;text-align:right;color:#4b5059">16</div>
<div class="code" style="left:861px;top:830.5px;width:64px;text-align:right;color:#4b5059">17</div>
<div class="code" style="left:861px;top:884.5px;width:64px;text-align:right;color:#4b5059">18</div>
<div class="code" style="left:861px;top:938.5px;width:64px;text-align:right;color:#4b5059">19</div>
<div class="code" style="left:861px;top:992.5px;width:64px;text-align:right;color:#4b5059">20</div>
<div class="code" style="left:861px;top:1046.5px;width:64px;text-align:right;color:#4b5059">21</div>
<div class="code" style="left:861px;top:1100.5px;width:64px;text-align:right;color:#4b5059">22</div>
<div class="code" style="left:861px;top:1154.5px;width:64px;text-align:right;color:#4b5059">23</div>
<div class="code" style="left:861px;top:1208.5px;width:64px;text-align:right;color:#4b5059">24</div>
<div class="code" style="left:861px;top:1262.5px;width:64px;text-align:right;color:#4b5059">25</div>
<div class="code" style="left:861px;top:1316.5px;width:64px;text-align:right;color:#4b5059">26</div>
<div class="code" style="left:861px;top:1370.5px;width:64px;text-align:right;color:#4b5059">27</div>
<div class="code" style="left:861px;top:1424.5px;width:64px;text-align:right;color:#4b5059">28</div>
<div class="code" style="left:861px;top:1478.5px;width:64px;text-align:right;color:#4b5059">29</div>
<div class="code" style="left:1022px;top:236.5px"><span class="k">use</span> App\Models\User;</div>
<div class="code" style="left:1022px;top:290.5px"><span class="k">use</span> App\Models\UserFlair;</div>
<div class="code" style="left:1022px;top:344.5px"><span class="k">use</span> App\Models\VerificationRequest;</div>
<div class="code" style="left:1022px;top:398.5px"><span class="k">use</span> App\Models\VerificationRequestStatus;</div>
<div class="code" style="left:1022px;top:506.5px"><span class="k">final readonly class</span> AcceptVerificationRequest</div>
<div class="code" style="left:1022px;top:560.5px">{</div>
<div class="code" style="left:1022px;top:614.5px">    <span class="k">public function</span> <span class="f">__construct</span>(<span class="k">public readonly</span> string|null <span class="v">$message</span>)</div>
<div class="code" style="left:1022px;top:668.5px">    {</div>
<div class="code" style="left:1022px;top:722.5px">    }</div>
<div class="code" style="left:1022px;top:830.5px">    <span class="k">public function</span> <span class="f">__invoke</span>(VerificationRequest <span class="v">$request</span>, UserFlair <span class="v">$flair</span>): <span class="k">void</span></div>
<div class="code" style="left:1022px;top:884.5px">    {</div>
<div class="code" style="left:1022px;top:938.5px">        <span class="v">$request</span>-&gt;<span class="f">update</span>([</div>
<div class="code" style="left:1022px;top:992.5px">            <span class="s">'status'</span> =&gt; VerificationRequestStatus::<span class="v">Accepted</span>,</div>
<div class="code" style="left:1022px;top:1046.5px">        ]);</div>
<div class="code" style="left:1022px;top:1154.5px">        <span class="v">$request</span>-&gt;<span class="k">user</span>-&gt;<span class="f">update</span>([</div>
<div class="code" style="left:1022px;top:1208.5px">            <span class="s">'flair'</span> =&gt; <span class="v">$flair</span>,</div>
<div class="code" style="left:1022px;top:1262.5px">        ]);</div>
<div class="code" style="left:1022px;top:1370.5px">        <span class="d">/**</span> <span class="d" style="color:#68a878">@var</span> <span class="i">User</span> <span class="v i">$authenticatedUser</span> <span class="d">*/</span></div>
<div class="code" style="left:1022px;top:1424.5px">        <span class="v">$authenticatedUser</span> = <span class="f">auth</span>()-&gt;<span class="f">user</span>();</div>
<div class="a" style="left:850px;top:1533px;width:2054px;height:2px;background:#2f3134;"></div>
<div class="a" style="left:1195px;top:1528px;width:96px;height:6px;background:#3a3d3a;"></div>
<div class="t" style="left:872.00px;top:1545.22px;font-size:34px;color:#a8abb0;font-weight:normal;"><span style="margin-right:3px">\</span>App<span style="margin:0 3px">\</span>Actions</div>
<svg class="a" style="left:1095px;top:1553px;" width="8" height="14" viewBox="0 0 8 14" fill="none"><path d="M1 1 L6.5 7 L1 13" stroke="#555a62" stroke-width="2" stroke-linecap="round" stroke-linejoin="round"/></svg>
<div class="t" style="left:1121.00px;top:1544.37px;font-size:35px;color:#a8abb0;font-weight:normal;">AcceptVerificationRequest</div>
<svg class="a" style="left:2850px;top:248px;" width="34" height="26" viewBox="0 0 34 26" fill="none"><path d="M3 13 L12 22 L31 3" stroke="#5fb865" stroke-width="4.2" stroke-linecap="round" stroke-linejoin="round"/></svg>
<div class="a" style="left:2878px;top:433px;width:18px;height:657px;border-radius:9px;background:#3c3e42"></div>
<div class="a" style="left:2868px;top:569px;width:36px;height:7px;background:#5d8268;"></div>
<div class="a" style="left:2868px;top:1091px;width:36px;height:7px;background:#5d8268;"></div>
<div class="a" style="left:2904px;top:122px;width:2px;height:1466px;background:#1e1f22;"></div>
<div class="a" style="left:2906px;top:122px;width:100px;height:1466px;background:#2b2d30;"></div>
<svg class="a" style="left:2932px;top:146px;" width="46" height="50" viewBox="0 0 46 50" fill="none"><path d="M10 25.5 V17.5 A13 13 0 0 1 36 17.5 V25.5 L42.3 36.3 Q43.8 38.8 41 38.8 H5 Q2.2 38.8 3.7 36.3 Z" stroke="#ced0d6" stroke-width="3.6" stroke-linejoin="round"/><path d="M17.5 42 H28.5 A5.5 5.5 0 0 1 17.5 42 Z" fill="#ced0d6"/></svg>
<svg class="a" style="left:2925px;top:240px;" width="60" height="60" viewBox="0 0 60 60" fill="none"><path d="M13 15 C 22 10.5, 40 10.5, 47 20 C 52.5 29, 45 40.5, 33.5 40.5 C 25 40.5, 20.5 35.5, 22 31.5 C 23.5 28, 29 27.5, 31 31" stroke="#ced0d6" stroke-width="3.4" stroke-linecap="round"/><path d="M46 46 C 36 50.5, 18 49, 12 39.5 C 7 31, 14 20.5, 26.5 20.5 C 34 20.5, 38.5 24.5, 37.5 29 C 36.5 33, 32 34, 30 32.5" stroke="#ced0d6" stroke-width="3.4" stroke-linecap="round"/></svg>
<svg class="a" style="left:2932px;top:346px;" width="46" height="50" viewBox="0 0 46 50" fill="none"><ellipse cx="23" cy="11" rx="18" ry="6.85" stroke="#ced0d6" stroke-width="3.8"/><path d="M5 11 V38.75 A18 6.85 0 0 0 41 38.75 V11 M5 20.35 A18 6.85 0 0 0 41 20.35 M5 29.45 A18 6.85 0 0 0 41 29.45" stroke="#ced0d6" stroke-width="3.8"/></svg>
<svg class="a" style="left:2933px;top:1514px;" width="46" height="47" viewBox="0 0 46 47" fill="none"><circle cx="17.5" cy="17.5" r="15" stroke="#ced0d6" stroke-width="3.6"/><path d="M28.5 28.5 L42.5 43" stroke="#ced0d6" stroke-width="3.6" stroke-linecap="round"/></svg>
<div class="a" style="left:0px;top:1587px;width:3022px;height:2px;background:#1e1f22;"></div>
<div class="a" style="left:0px;top:1589px;width:3022px;height:72px;background:#2b2d30;"></div>
<div class="a" style="left:54px;top:1617px;width:20px;height:19px;border-radius:3px;background:#25324d;border:2.6px solid #548af7"></div>
<div class="t" style="left:84.00px;top:1606.37px;font-size:35px;color:#a8abb0;font-weight:normal;">rfc-vote</div>
<svg class="a" style="left:233px;top:1616px;" width="13" height="19" viewBox="0 0 13 19" fill="none"><path d="M1.5 1.5 L10.5 9.5 L1.5 17.5" stroke="#a8abb0" stroke-width="2.6" stroke-linecap="round" stroke-linejoin="round"/></svg>
<div class="t" style="left:271.00px;top:1606.37px;font-size:35px;color:#a8abb0;font-weight:normal;">app</div>
<svg class="a" style="left:351px;top:1616px;" width="13" height="19" viewBox="0 0 13 19" fill="none"><path d="M1.5 1.5 L10.5 9.5 L1.5 17.5" stroke="#a8abb0" stroke-width="2.6" stroke-linecap="round" stroke-linejoin="round"/></svg>
<div class="t" style="left:389.00px;top:1606.37px;font-size:35px;color:#a8abb0;font-weight:normal;">Actions</div>
<svg class="a" style="left:528px;top:1616px;" width="13" height="19" viewBox="0 0 13 19" fill="none"><path d="M1.5 1.5 L10.5 9.5 L1.5 17.5" stroke="#a8abb0" stroke-width="2.6" stroke-linecap="round" stroke-linejoin="round"/></svg>
<svg class="a" style="left:567px;top:1606.5px;" width="35" height="35" viewBox="0 0 35 35" fill="none"><circle cx="17.5" cy="17.5" r="16.1" fill="#25324d" stroke="#548af7" stroke-width="2.8"/><path d="M25.1 13.6 A7.6 7.6 0 1 0 25.1 21.6" stroke="#548af7" stroke-width="2.8"/></svg>
<div class="t" style="left:615.00px;top:1606.37px;font-size:35px;color:#a8abb0;font-weight:normal;">AcceptVerificationRequest.php</div>
<svg class="a" style="left:1115px;top:1616px;" width="13" height="19" viewBox="0 0 13 19" fill="none"><path d="M1.5 1.5 L10.5 9.5 L1.5 17.5" stroke="#a8abb0" stroke-width="2.6" stroke-linecap="round" stroke-linejoin="round"/></svg>
<svg class="a" style="left:1154px;top:1606.5px;" width="35" height="35" viewBox="0 0 35 35" fill="none"><circle cx="17.5" cy="17.5" r="16.1" fill="#25324d" stroke="#548af7" stroke-width="2.8"/><path d="M25.1 13.6 A7.6 7.6 0 1 0 25.1 21.6" stroke="#548af7" stroke-width="2.8"/></svg>
<div class="t" style="left:1202.00px;top:1606.37px;font-size:35px;color:#a8abb0;font-weight:normal;">AcceptVerificationRequest</div>
<div class="t" style="left:1780.00px;top:1606.37px;font-size:35px;color:#a8abb0;font-weight:normal;">PHP: 8.2</div>
<div class="t" style="left:1952.00px;top:1606.37px;font-size:35px;color:#a8abb0;font-weight:normal;">Laravel: 10.40</div>
<div class="t" style="left:2208.00px;top:1606.37px;font-size:35px;color:#a8abb0;font-weight:normal;">11:31</div>
<div class="t" style="left:2322.00px;top:1606.37px;font-size:35px;color:#a8abb0;font-weight:normal;">LF</div>
<div class="t" style="left:2400.00px;top:1606.37px;font-size:35px;color:#a8abb0;font-weight:normal;">UTF-8</div>
<svg class="a" style="left:2536px;top:1603px;transform:scale(0.72);transform-origin:0 0" width="60" height="60" viewBox="0 0 60 60" fill="none"><path d="M13 15 C 22 10.5, 40 10.5, 47 20 C 52.5 29, 45 40.5, 33.5 40.5 C 25 40.5, 20.5 35.5, 22 31.5 C 23.5 28, 29 27.5, 31 31" stroke="#ced0d6" stroke-width="4.4" stroke-linecap="round"/><path d="M46 46 C 36 50.5, 18 49, 12 39.5 C 7 31, 14 20.5, 26.5 20.5 C 34 20.5, 38.5 24.5, 37.5 29 C 36.5 33, 32 34, 30 32.5" stroke="#ced0d6" stroke-width="4.4" stroke-linecap="round"/></svg>
<svg class="a" style="left:2620px;top:1605px;transform:scale(0.8);transform-origin:0 0" width="50" height="46" viewBox="0 0 50 46" fill="none"><g stroke="#ced0d6" stroke-width="3.2" stroke-linecap="round" fill="none"><path d="M12.7 17 H37.3 V31 A12.3 12.3 0 0 1 12.7 31 Z"/><path d="M17.7 17 V11.7 A6.3 6.3 0 0 1 30.3 11.7 V17"/><path d="M2 27.4 H12.7 M37.3 27.4 H47.9 M5 15 L12.7 19 M37.3 19 L45 15 M5 40.6 L12.7 36.5 M37.3 36.5 L45 40.6"/></g><path d="M34 3 L47.5 16.5 M47.5 3 L34 16.5" stroke="#2b2d30" stroke-width="10" stroke-linecap="round"/><path d="M34 3 L47.5 16.5 M47.5 3 L34 16.5" stroke="#e55765" stroke-width="3.4" stroke-linecap="round"/></svg>
<div class="t" style="left:2700.00px;top:1606.37px;font-size:35px;color:#a8abb0;font-weight:normal;">4 spaces</div>
<svg class="a" style="left:2847px;top:1608px;" width="40" height="42" viewBox="0 0 40 42" fill="none"><path d="M13.5 35 H5.5 Q2 35 2 31.5 V10 L10 2 H17.5 Q21 2 21 5.5 V17 M2 10 H7 Q10 10 10 7 V2" stroke="#ced0d6" stroke-width="2.6" stroke-linejoin="round" stroke-linecap="round"/><path d="M32.60 30.00 L29.37 33.10 L28.30 37.45 L24.00 36.20 L19.70 37.45 L18.63 33.10 L15.40 30.00 L18.63 26.90 L19.70 22.55 L24.00 23.80 L28.30 22.55 L29.37 26.90 Z" stroke="#ced0d6" stroke-width="2.6" stroke-linejoin="round" fill="#2b2d30"/><circle cx="24" cy="30" r="2" fill="#ced0d6"/></svg>
<svg class="a" style="left:2926px;top:1609px;" width="36" height="34" viewBox="0 0 36 34" fill="none"><rect x="1.5" y="14.5" width="23.5" height="17" rx="3" stroke="#ced0d6" stroke-width="2.6"/><path d="M19 14.5 V9 Q19 2 26 2 Q33 2 33 9 V12" stroke="#ced0d6" stroke-width="2.6" stroke-linecap="round"/><path d="M13.2 20.5 V25" stroke="#ced0d6" stroke-width="2.6" stroke-linecap="round"/></svg>
<div class="a" style="left:1598px;top:556px;width:630px;height:1015px;border-radius:20px;background:#2b2d30;border:2px solid #43454a;box-shadow:0 8px 28px rgba(0,0,0,0.45)"></div>
<div class="t" style="left:1809.00px;top:589.67px;font-size:33px;color:#dfe1e5;font-weight:bold;">Refactor This</div>
<div class="a" style="left:1628px;top:652px;width:570px;height:60px;border-radius:10px;background:#2e436e"></div>
<div class="t" style="left:1670.00px;top:664.92px;font-size:34px;color:#dfe1e5;font-weight:normal;">1</div>
<div class="t" style="left:1709.00px;top:664.92px;font-size:34px;color:#dfe1e5;font-weight:normal;">Rename...</div>
<svg class="a" style="left:2098px;top:670px;" width="26" height="26" viewBox="0 0 26 26" fill="none"><path d="M13 2 L24 13.5 H18.5 V23.5 H7.5 V13.5 H2 Z" stroke="#dfe1e5" stroke-width="2.4" stroke-linejoin="round"/></svg>
<div class="t" style="left:2127.00px;top:664.92px;font-size:34px;color:#dfe1e5;font-weight:normal;">F6</div>
<div class="a" style="left:1628px;top:722px;width:570px;height:2px;background:#393b40;"></div>
<div class="t" style="left:1649.00px;top:746.18px;font-size:30.5px;color:#6f737a;font-weight:bold;">Extract/Introduce</div>
<div class="t" style="left:1670.00px;top:800.72px;font-size:34px;color:#6f737a;font-weight:normal;">2</div>
<div class="t" style="left:1709.00px;top:800.72px;font-size:34px;color:#dfe1e5;font-weight:normal;">Introduce Variable...</div>
<div class="t" style="right:856px;top:800.72px;font-size:34px;color:#6f737a"><span style="font-size:30px;letter-spacing:-0.5px">&#8997;&#8984;</span>V</div>
<div class="t" style="left:1670.00px;top:860.72px;font-size:34px;color:#6f737a;font-weight:normal;">3</div>
<div class="t" style="left:1709.00px;top:860.72px;font-size:34px;color:#dfe1e5;font-weight:normal;">Introduce Constant...</div>
<div class="t" style="right:856px;top:860.72px;font-size:34px;color:#6f737a"><span style="font-size:30px;letter-spacing:-0.5px">&#8997;&#8984;</span>C</div>
<div class="t" style="left:1670.00px;top:920.72px;font-size:34px;color:#6f737a;font-weight:normal;">4</div>
<div class="t" style="left:1709.00px;top:920.72px;font-size:34px;color:#dfe1e5;font-weight:normal;">Introduce Field...</div>
<div class="t" style="right:856px;top:920.72px;font-size:34px;color:#6f737a"><span style="font-size:30px;letter-spacing:-0.5px">&#8997;&#8984;</span>F</div>
<div class="t" style="left:1670.00px;top:980.72px;font-size:34px;color:#6f737a;font-weight:normal;">5</div>
<div class="t" style="left:1709.00px;top:980.72px;font-size:34px;color:#dfe1e5;font-weight:normal;">Introduce Parameter...</div>
<div class="t" style="left:1670.00px;top:1040.72px;font-size:34px;color:#6f737a;font-weight:normal;">6</div>
<div class="t" style="left:1709.00px;top:1040.72px;font-size:34px;color:#dfe1e5;font-weight:normal;">Extract Method...</div>
<div class="t" style="right:856px;top:1040.72px;font-size:34px;color:#6f737a"><span style="font-size:30px;letter-spacing:-0.5px">&#8997;&#8984;</span>M</div>
<div class="t" style="left:1670.00px;top:1100.72px;font-size:34px;color:#6f737a;font-weight:normal;">7</div>
<div class="t" style="left:1709.00px;top:1100.72px;font-size:34px;color:#dfe1e5;font-weight:normal;">Extract Class...</div>
<div class="t" style="left:1670.00px;top:1160.72px;font-size:34px;color:#6f737a;font-weight:normal;">8</div>
<div class="t" style="left:1709.00px;top:1160.72px;font-size:34px;color:#dfe1e5;font-weight:normal;">Extract Interface...</div>
<div class="a" style="left:1628px;top:1218px;width:570px;height:2px;background:#393b40;"></div>
<div class="t" style="left:1670.00px;top:1243.42px;font-size:34px;color:#6f737a;font-weight:normal;">9</div>
<div class="t" style="left:1709.00px;top:1243.42px;font-size:34px;color:#dfe1e5;font-weight:normal;">Move Class...</div>
<div class="t" style="right:856px;top:1243.42px;font-size:34px;color:#6f737a">F6</div>
<div class="t" style="left:1670.00px;top:1302.72px;font-size:34px;color:#6f737a;font-weight:normal;">0</div>
<div class="t" style="left:1709.00px;top:1302.72px;font-size:34px;color:#dfe1e5;font-weight:normal;">Copy Class</div>
<div class="t" style="right:856px;top:1302.72px;font-size:34px;color:#6f737a">F5</div>
<div class="t" style="left:1709.00px;top:1362.92px;font-size:34px;color:#dfe1e5;font-weight:normal;">Safe Delete...</div>
<svg class="a" style="left:2098px;top:1370px;" width="68" height="26" viewBox="0 0 68 26" fill="none"><path d="M8 8 H20 V18 H8 Z M8 8 A4 4 0 1 1 8 4 V22 A4 4 0 1 1 4 18 H24 A4 4 0 1 1 20 22 V4 A4 4 0 1 1 24 8 H8" stroke="#6f737a" stroke-width="2.4"/><path d="M33 3 H56 L66 13 L56 23 H33 Z M40 7.5 L49 18.5 M49 7.5 L40 18.5" stroke="#6f737a" stroke-width="2.4" stroke-linejoin="round"/></svg>
<div class="a" style="left:1628px;top:1420px;width:570px;height:2px;background:#393b40;"></div>
<div class="t" style="left:1709.00px;top:1444.92px;font-size:34px;color:#dfe1e5;font-weight:normal;">Pull Members Up...</div>
<div class="t" style="left:1709.00px;top:1504.82px;font-size:34px;color:#dfe1e5;font-weight:normal;">Push Members Down...</div>
<div class="a" style="left:18px;top:20px;width:2988px;height:1642px;border-radius:21px;border:2px solid;border-color:#7f867f #57595d #55565a #57595d;pointer-events:none"></div>
</div></body></html>
